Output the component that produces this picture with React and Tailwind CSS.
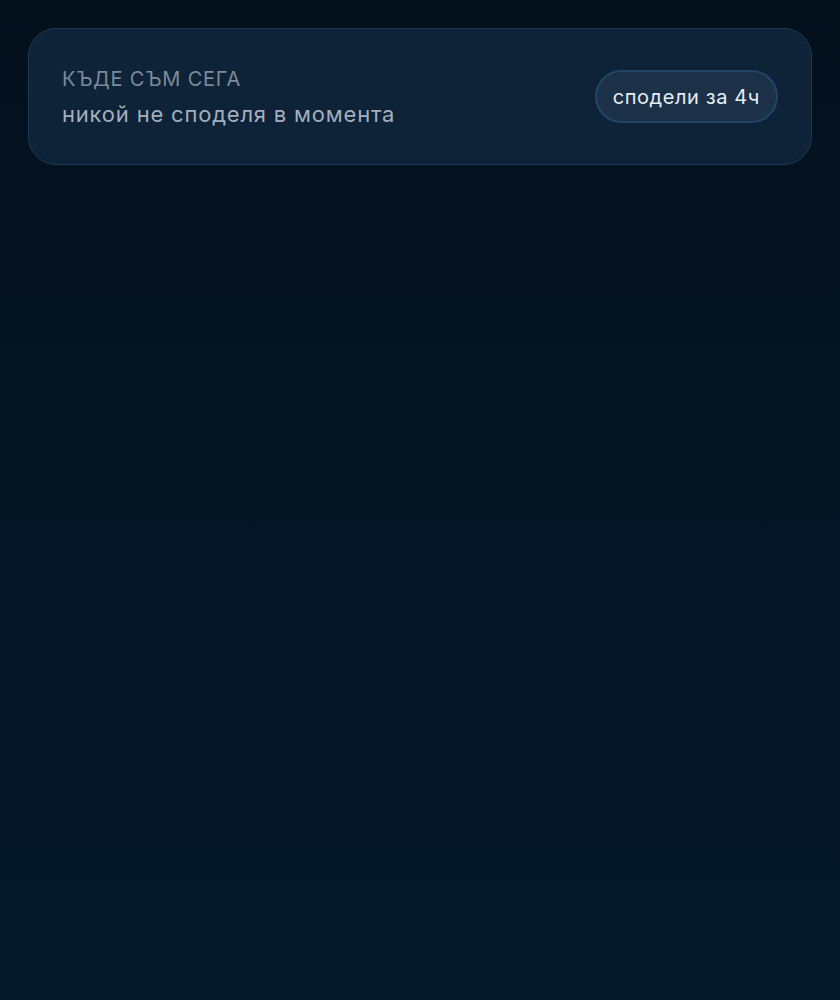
export default function App() {
  return (
    <div
      lang="bg"
      className="min-h-[1000px] w-full bg-gradient-to-b from-[#04101c] to-[#061a2c] p-[28px]"
      style={{ fontFamily: 'Inter, "Noto Sans", sans-serif' }}
    >
      <div className="flex items-center justify-between rounded-[28px] border border-[#1a3a5a] bg-[#0e2238] py-[35.5px] pl-[33px] pr-[33px]">
        <div className="flex flex-col gap-[6px]">
          <p className="text-[20px] leading-[28px] uppercase tracking-[0.8px] text-[#7c8a9a]">къде съм сега</p>
          <p className="text-[22px] leading-[30px] tracking-[0.8px] text-[#a3afbd]">никой не споделя в момента</p>
        </div>
        <button className="h-[53px] rounded-full border-2 border-[#22466a] bg-[#1c3047] px-[16px] text-[20px] tracking-[0.6px] text-[#e6edf5]">
          сподели за 4ч
        </button>
      </div>
    </div>
  );
}
